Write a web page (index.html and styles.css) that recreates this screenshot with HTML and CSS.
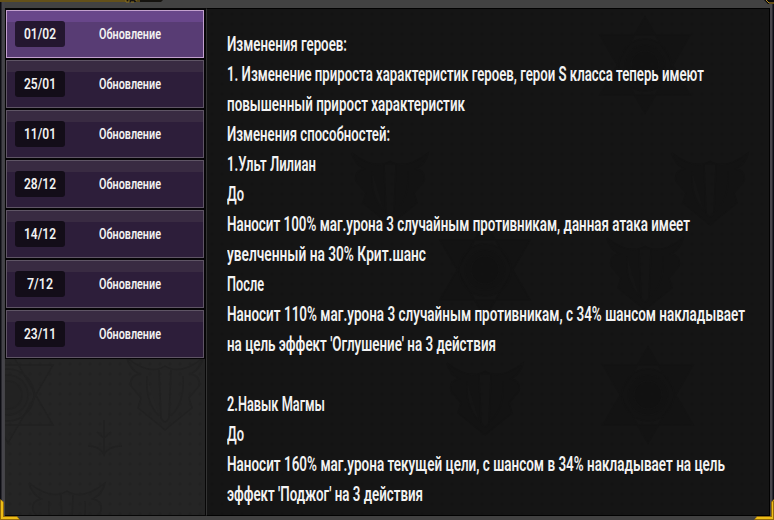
FILE: index.html
```
<!DOCTYPE html>
<html lang="ru">
<head>
<meta charset="utf-8">
<title>Обновления</title>
<link rel="stylesheet" href="styles.css">
</head>
<body>
<div class="window">
  <nav class="sidebar" id="sidebar"></nav>
  <main class="content" id="content"></main>
  <svg class="trim" width="774" height="520" viewBox="0 0 774 520">
    <path d="M0 0H163L161 2H0Z" fill="#15130f"/>
    <path d="M0 .5H126M0 1.5H126" stroke="#63501a" stroke-width="1"/>
    <path d="M126 0V2H129V0M131 2H134M136 0V1H140" fill="none" stroke="#8f731f"/>
    <path d="M0 499L4 502V516H17L20 520H0Z" fill="#936b0b"/>
    <path d="M1 500L3 502V517H17L19 519H1Z" fill="#edbd16"/>
    <path d="M774 499L771 502V516H757L754 520H774Z" fill="#936b0b"/>
    <path d="M774 500L772 502V517H757L755 519H773V500Z" fill="#edbd16"/>
    <path d="M764 0L768 4H774V0Z" fill="#08090c"/>
    <path d="M766 0L769 3H774" fill="none" stroke="#c19525"/>
  </svg>
</div>
<script src="app.js"></script>
</body>
</html>
```

FILE: styles.css
```
* { box-sizing: border-box; }
body { margin: 0; background: #0b0b0d; overflow: hidden; }
.window {
  position: relative;
  display: flex;
  width: 774px;
  height: 520px;
  padding: 8px 4px 4px 5px;
  background: linear-gradient(90deg, #0c0c12 0 1px, #45444a 2px 4px, #424242 5px 770px, #48464c 770px 772px, #0c0c14 773px);
}
.sidebar {
  position: relative;
  width: 201px;
  height: 508px;
  border: 1px solid #070707;
  border-left-width: 0;
  background: radial-gradient(circle, #222222 1px, transparent 2px) 0 0 / 10px 10px, #252525;
}
.entry {
  position: relative;
  display: flex;
  align-items: center;
  width: 200px;
  height: 50px;
  padding-left: 9px;
  border: 1px solid #060507;
  background: linear-gradient(#392b42 0 12px, #2d1e3a 12px) padding-box;
  box-shadow: inset 0 0 0 1px #5f5565;
}
.entry.active {
  background: linear-gradient(#68468a 0 12px, #583c74 12px) padding-box;
  box-shadow: inset 0 0 0 1px #c2a0ce;
}
.entry svg { display: block; flex: none; }
.date {
  width: 50px;
  height: 26px;
  border-radius: 3px;
  background: #130d18;
}
.active .date { background: #241730; }
.label { width: 66px; height: 26px; margin-left: 34px; }
.content {
  position: relative;
  width: 564px;
  height: 508px;
  padding: 20px 0 0 20px;
  border: 1px solid #020202;
  border-left: 1px solid #343434;
  background: radial-gradient(circle, #131313 1px, transparent 2px) 0 0 / 10px 10px, #151515;
}
.line { position: relative; display: block; width: 542px; height: 30px; }
text { font-family: Roboto, "Noto Sans", sans-serif; font-weight: 600; fill: #f2f2f2; }
.line text { font-size: 19.5px; }
.entry text { font-size: 15.3px; }
.motifs { position: absolute; left: 0; top: 0; }
.ornament { fill: #222222; fill-opacity: .35; stroke: #212121; stroke-width: 1.5; }
.content .ornament { fill: #121212; stroke: #131313; }
.trim { position: absolute; inset: 0; pointer-events: none; }
```

FILE: app.js
```
const dates = ["01/02", "25/01", "11/01", "28/12", "14/12", "7/12", "23/11"];

// Each line of the notes with its set width in pixels.
const lines = [
  ["Изменения героев:", 120],
  ["1. Изменение прироста характеристик героев, герои S класса теперь имеют", 477],
  ["повышенный прирост характеристик", 238],
  ["Изменения способностей:", 163],
  ["1.Ульт Лилиан", 89],
  ["До", 17],
  ["Наносит 100% маг.урона 3 случайным противникам, данная атака имеет", 463],
  ["увелченный на 30% Крит.шанс", 199],
  ["После", 37],
  ["Наносит 110% маг.урона 3 случайным противникам, с 34% шансом накладывает", 518],
  ["на цель эффект 'Оглушение' на 3 действия", 269],
  ["", 1],
  ["2.Навык Магмы", 98],
  ["До", 17],
  ["Наносит 160% маг.урона текущей цели, с шансом в 34% накладывает на цель", 498],
  ["эффект 'Поджог' на 3 действия", 196]
];

const fitted = (text, x, y, width) =>
  `<text x="${x}" y="${y}" textLength="${width}" lengthAdjust="spacingAndGlyphs">${text}</text>`;

const star = (x, y) => `<g transform="translate(${x} ${y})"><path d="M-45-30H45L0 48ZM-45 30H45L0-48Z"/><circle r="26"/><circle r="20"/><circle r="14"/></g>`;
const crest = (x, y) => `<g transform="translate(${x} ${y})"><path d="M-38-32Q-15-14 0-24Q15-14 38-32Q36-22 26-16Q36-14 34-4L24 8L27 18Q12 30 0 40Q-12 30-27 18L-24 8L-34-4Q-36-14-26-16Q-36-22-38-32M-6-20L-4 28Q0 36 4 28L6-20M-18-14Q-20 12-6 26M18-14Q20 12 6 26"/></g>`;
const motifs = (x, width, shapes) =>
  `<svg class="motifs" width="${width}" height="506" viewBox="${x} 9 ${width} 506"><g class="ornament">${shapes}</g></svg>`;

document.getElementById("sidebar").innerHTML =
  motifs(5, 200, star(8, 395) + crest(165, 390) + crest(67, 515) +
    `<path d="M88 446Q100 446 104 455Q108 446 122 446M104 420V455M97 432L104 438L111 432"/>`) +
  dates.map((date, i) => {
    const width = date.length === 4 ? 26 : 32;
    return `<div class="entry${i ? "" : " active"}">
      <svg class="date" width="50" height="26">${fitted(date, (50 - width) / 2, 18, width)}</svg>
      <svg class="label" width="66" height="26">${fitted("Обновление", 0, 18, 62)}</svg>
    </div>`;
  }).join("");

document.getElementById("content").innerHTML =
  motifs(207, 562, star(645, 65) + crest(390, 185) + crest(710, 185) + star(485, 270) + crest(645, 270) + crest(485, 395) + star(648, 395)) +
  lines.map(([text, width]) =>
    `<svg class="line">${text ? fitted(text, 0, 21.5, width) : ""}</svg>`
  ).join("");
```
